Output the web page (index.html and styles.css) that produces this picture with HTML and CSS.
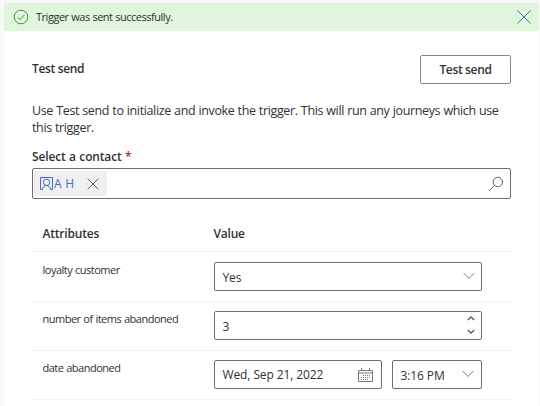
FILE: index.html
```html
<!DOCTYPE html>
<html lang="en">
<head>
<meta charset="utf-8">
<title>Test send</title>
<link rel="stylesheet" href="styles.css">
</head>
<body>
<main class="panel">
  <div class="banner">
    <svg class="ok" width="16" height="16" viewBox="0 0 16 16"><circle cx="8" cy="8" r="6.8"/><path d="M4.6 8.2 7 10.6 11.6 5.7"/></svg>
    <span class="banner-text">Trigger was sent successfully.</span>
    <svg class="close" width="14" height="14" viewBox="0 0 14 14"><path d="M.5.5 13.5 13.5M13.5.5.5 13.5"/></svg>
  </div>
  <div class="content">
    <header class="head">
      <h1>Test send</h1>
      <button class="send">Test send</button>
    </header>
    <p class="desc">Use Test send to initialize and invoke the trigger. This will run any journeys which use<br>this trigger.</p>
    <div class="label"><span>Select a contact</span> <span class="req">*</span></div>
    <div class="lookup">
      <div class="chip">
        <svg class="person" width="13" height="13" viewBox="0 0 13 13"><path d="M2.5 12.5H.5V.5H12.5V12.5H10.500M2.500 12.500C2.500 10 4.300 8.500 6.500 8.500S10.500 10 10.500 12.500"/><circle cx="6.500" cy="5.300" r="3.200"/></svg>
        <span class="name">A H</span>
        <svg class="remove" width="12" height="12" viewBox="0 0 12 12"><path d="M.7.7 11.300 11.300M11.300.7.7 11.300"/></svg>
      </div>
      <svg class="search" width="16" height="16" viewBox="0 0 16 16"><circle cx="9.800" cy="6" r="4.700"/><path d="M6.400 9.400.8 15"/></svg>
    </div>
    <section class="table">
      <div class="row header"><span>Attributes</span><span>Value</span></div>
      <div class="row first">
        <span class="attr">loyalty customer</span>
        <div class="field"><span>Yes</span><svg class="chev" width="12" height="8" viewBox="0 0 12 8"><path d="M.7 1 6 6.500 11.300 1"/></svg></div>
      </div>
      <div class="row">
        <span class="attr">number of items abandoned</span>
        <div class="field"><span class="num">3</span><svg class="spin" width="8" height="20" viewBox="0 0 8 20"><path d="M.8 5 4 2 7.200 5M.8 15 4 18 7.200 15"/></svg></div>
      </div>
      <div class="row">
        <span class="attr">date abandoned</span>
        <div class="pair">
          <div class="field date"><span>Wed, Sep 21, 2022</span><svg class="cal" width="15" height="14" viewBox="0 0 15 14"><path d="M.5 2.500H14.500V13.500H.5ZM.5 5H14.500M3.500 0V3M11.500 0V3"/><path class="dots" d="M5 7.500H13M3 9.500H13M3 11.500H10"/></svg></div>
          <div class="field time"><span>3:16 PM</span><svg class="chev" width="12" height="8" viewBox="0 0 12 8"><path d="M.7 1 6 6.500 11.300 1"/></svg></div>
        </div>
      </div>
    </section>
  </div>
</main>
</body>
</html>
```
FILE: styles.css
```css
* { box-sizing: border-box; }
body {
  margin: 0;
  height: 406px;
  overflow: hidden;
  padding: 3px 1px 0 4px;
  background: #f8f8f8;
  color: #323130;
  font-family: "Open Sans", "Noto Sans", sans-serif;
  font-size: 12px;
}
svg { flex: none; fill: none; stroke: #605e5c; stroke-width: 1; }
.panel { height: 403px; background: #fff; }
.banner {
  display: flex;
  align-items: center;
  height: 28px;
  padding: 0 8px 0 9px;
  background: #dff6dd;
}
.ok { stroke: #3f8f45; }
.banner-text { margin: -1px 0 0 7px; font-size: 11px; letter-spacing: -0.48px; word-spacing: 0.3px; }
.close { margin-left: auto; stroke: #387ca8; }
.content { padding: 24px 28px 0; }
.head { display: flex; justify-content: space-between; height: 29px; }
h1 { margin: 5px 0 0; font-size: 12px; line-height: 17px; font-weight: 600; letter-spacing: -0.35px; }
.send {
  width: 91px;
  height: 29px;
  padding: 0;
  border: 1px solid #8a8886;
  border-radius: 2px;
  background: #fff;
  color: #323130;
  font: 600 12px "Open Sans", sans-serif;
  letter-spacing: -0.35px;
}
.desc { margin: 19px 0 0; font-size: 12.500px; line-height: 16.500px; letter-spacing: -0.36px; word-spacing: 0.3px; white-space: nowrap; }
.label { margin-top: 12px; height: 20px; line-height: 18px; font-weight: 600; letter-spacing: -0.15px; word-spacing: 0.5px; }
.req { color: #a4262c; }
.lookup {
  display: flex;
  align-items: center;
  height: 31px;
  padding: 0 6px 0 1px;
  border: 1px solid #706e6c;
  border-radius: 2px;
}
.chip { display: flex; align-items: center; width: 73px; height: 25px; padding-left: 6px; background: #f0f0f0; }
.person { stroke: #4468c4; }
.name { margin-left: 1px; width: 33px; color: #4468c4; white-space: nowrap; word-spacing: 0.5px; }
.search { margin-left: auto; }
.table { margin-top: 15px; }
.row {
  display: grid;
  grid-template-columns: 171px 268px;
  height: 49px;
  padding: 9px 0 0 10.500px;
  border-bottom: 1px solid #f1f1f1;
}
.first { height: 50px; padding-top: 10px; }
.header { height: 38px; padding-top: 11px; font-weight: 600; line-height: 17px; letter-spacing: -0.2px; }
.attr { margin-top: -1px; font-size: 11px; line-height: 17px; letter-spacing: -0.5px; word-spacing: 0.4px; }
.field {
  display: flex;
  align-items: center;
  justify-content: space-between;
  height: 29px;
  padding: 2px 6px 0 8px;
  border: 1px solid #706e6c;
  border-radius: 2px;
  letter-spacing: -0.1px;
}
.pair { display: grid; grid-template-columns: 168px 90px; gap: 10px; }
.date { padding: 0 8px 0 8px; }
.time .chev { margin-right: 1px; }
.chev { margin-top: -4px; stroke: #807e7c; }
.spin { margin-top: -4px; stroke-width: 1.400; }
.cal { stroke: #797775; }
.dots { stroke-dasharray: 1 1; }
```
